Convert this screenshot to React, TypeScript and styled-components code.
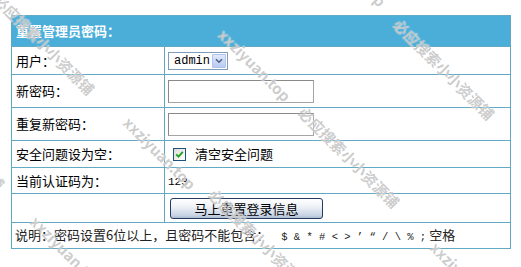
import React from 'react';
import styled, { createGlobalStyle } from 'styled-components';

const GlobalStyle = createGlobalStyle`
  html, body { margin: 0; padding: 0; background: #fff; }
  body { font-family: "Noto Sans CJK SC", "Noto Sans", sans-serif; }
`;

const Page = styled.div`
  position: relative;
  width: 521px;
  height: 267px;
  overflow: hidden;
  padding: 15px 0 0 11px;
  box-sizing: border-box;
`;

const Table = styled.table`
  width: 500px;
  border-collapse: collapse;
  table-layout: fixed;
  font-size: 13px;
  color: #000;
`;

const Row = styled.tr<{ $h: number }>`
  height: ${(p) => p.$h}px;
`;

const cellBase = `
  border: 1px solid #62a9c4;
  padding: 0 0 0 4px;
  vertical-align: middle;
  line-height: 16px;
`;

const HeaderCell = styled.th`
  ${cellBase}
  background: #4aaed9;
  color: #fff;
  font-weight: bold;
  text-align: left;
`;

const LabelCell = styled.td`
  ${cellBase}
`;

const ValueCell = styled.td`
  ${cellBase}
  padding-left: 3px;
`;

const NoteCell = styled.td`
  ${cellBase}
  padding-left: 3px;
  color: #222;
`;

const SelectBox = styled.div`
  display: inline-flex;
  align-items: center;
  justify-content: space-between;
  box-sizing: border-box;
  width: 60px;
  height: 18px;
  border: 1px solid #7f9db9;
  background: #fff;
  padding: 0 1px 0 5px;
  font-family: "Liberation Mono", monospace;
  font-size: 12px;
  vertical-align: middle;
`;

const DropButton = styled.span`
  display: flex;
  align-items: center;
  justify-content: center;
  width: 14px;
  height: 14px;
  background: linear-gradient(#e0e8fb, #b9cbf3);
  border: 1px solid #b1c3ec;
  box-sizing: border-box;
  border-radius: 1px;
`;

const TextInput = styled.input`
  box-sizing: border-box;
  width: 146px;
  height: 23px;
  border: 1px solid #a5a5a5;
  border-top-color: #8a8a8a;
  border-left-color: #8a8a8a;
  margin: 0;
  padding: 0 2px;
  vertical-align: middle;
`;

const CheckLine = styled.label`
  display: inline-flex;
  align-items: center;
  gap: 9px;
  margin-left: 5px;
`;

const CheckBox = styled.span`
  display: inline-flex;
  align-items: center;
  justify-content: center;
  box-sizing: border-box;
  width: 13px;
  height: 13px;
  border: 1px solid #1c5180;
  background: linear-gradient(135deg, #dcdcd7, #ffffff);
`;

const Mono = styled.span`
  font-family: "Liberation Mono", monospace;
  font-size: 11px;
`;

const SubmitButton = styled.button`
  box-sizing: border-box;
  width: 153px;
  height: 21px;
  margin: 0 0 0 2px;
  padding: 0;
  border: 1px solid #263c5c;
  border-radius: 3px;
  background: linear-gradient(#ffffff 0%, #eef2f8 40%, #c9d4e4 85%, #aebcd2 100%);
  font-family: "Noto Sans CJK SC", sans-serif;
  font-size: 13px;
  line-height: 17px;
  color: #000;
  vertical-align: middle;
`;

const Symbols = styled.span`
  font-family: "Liberation Mono", monospace;
  font-size: 10.5px;
  margin-left: 12px;
  margin-right: 3px;
`;

const Watermark = styled.span<{ $x: number; $y: number }>`
  position: absolute;
  left: ${(p) => p.$x}px;
  top: ${(p) => p.$y}px;
  transform: rotate(45deg);
  transform-origin: 0 0;
  white-space: nowrap;
  font-family: "Noto Sans CJK SC", "Liberation Sans", sans-serif;
  font-size: 15px;
  font-weight: bold;
  color: rgba(110, 110, 110, 0.36);
  text-shadow: 0 0 1px #fff;
  pointer-events: none;
`;

const marks: { t: string; x: number; y: number }[] = [
  { t: '必应搜索小小资源铺', x: 4, y: -11 },
  { t: '必应搜索小小资源铺', x: 404, y: 14 },
  { t: '必应搜索小小资源铺', x: 309, y: 102 },
  { t: '必应搜索小小资源铺', x: 219, y: 184 },
  { t: '必应搜索小小资源铺', x: -86, y: 84 },
  { t: 'xxziyuan.top', x: 229, y: 24 },
  { t: 'xxziyuan.top', x: 134, y: 112 },
  { t: 'xxziyuan.top', x: 41, y: 211 },
  { t: 'xxziyuan.top', x: 441, y: 237 },
  { t: 'xxziyuan.top', x: 324, y: -71 },
];

export default function App() {
  return (
    <Page>
      <GlobalStyle />
      <Table>
        <colgroup>
          <col style={{ width: '153px' }} />
          <col />
        </colgroup>
        <tbody>
          <Row $h={31}>
            <HeaderCell colSpan={2}>重置管理员密码：</HeaderCell>
          </Row>
          <Row $h={28}>
            <LabelCell>用户：</LabelCell>
            <ValueCell>
              <SelectBox>
                <span>admin</span>
                <DropButton>
                  <svg width="8" height="6" viewBox="0 0 8 6">
                    <path d="M1 1.2 L4 4.2 L7 1.2" fill="none" stroke="#4d6185" strokeWidth="1.6" />
                  </svg>
                </DropButton>
              </SelectBox>
            </ValueCell>
          </Row>
          <Row $h={33}>
            <LabelCell>新密码：</LabelCell>
            <ValueCell>
              <TextInput type="password" />
            </ValueCell>
          </Row>
          <Row $h={33}>
            <LabelCell>重复新密码：</LabelCell>
            <ValueCell>
              <TextInput type="password" />
            </ValueCell>
          </Row>
          <Row $h={27}>
            <LabelCell>安全问题设为空：</LabelCell>
            <ValueCell>
              <CheckLine>
                <CheckBox>
                  <svg width="9" height="9" viewBox="0 0 9 9">
                    <path d="M1.2 4.3 L3.5 6.6 L7.8 1.8" fill="none" stroke="#21a121" strokeWidth="1.8" />
                  </svg>
                </CheckBox>
                清空安全问题
              </CheckLine>
            </ValueCell>
          </Row>
          <Row $h={26}>
            <LabelCell>当前认证码为：</LabelCell>
            <ValueCell>
              <Mono>123</Mono>
            </ValueCell>
          </Row>
          <Row $h={29}>
            <LabelCell />
            <ValueCell>
              <SubmitButton type="button">马上重置登录信息</SubmitButton>
            </ValueCell>
          </Row>
          <Row $h={26}>
            <NoteCell colSpan={2}>
              说明：密码设置6位以上，且密码不能包含：
              <Symbols>$ &amp; * # &lt; &gt; ’ “ / \ % ;</Symbols>
              空格
            </NoteCell>
          </Row>
        </tbody>
      </Table>
      {marks.map((m, i) => (
        <Watermark key={i} $x={m.x} $y={m.y}>
          {m.t}
        </Watermark>
      ))}
    </Page>
  );
}
